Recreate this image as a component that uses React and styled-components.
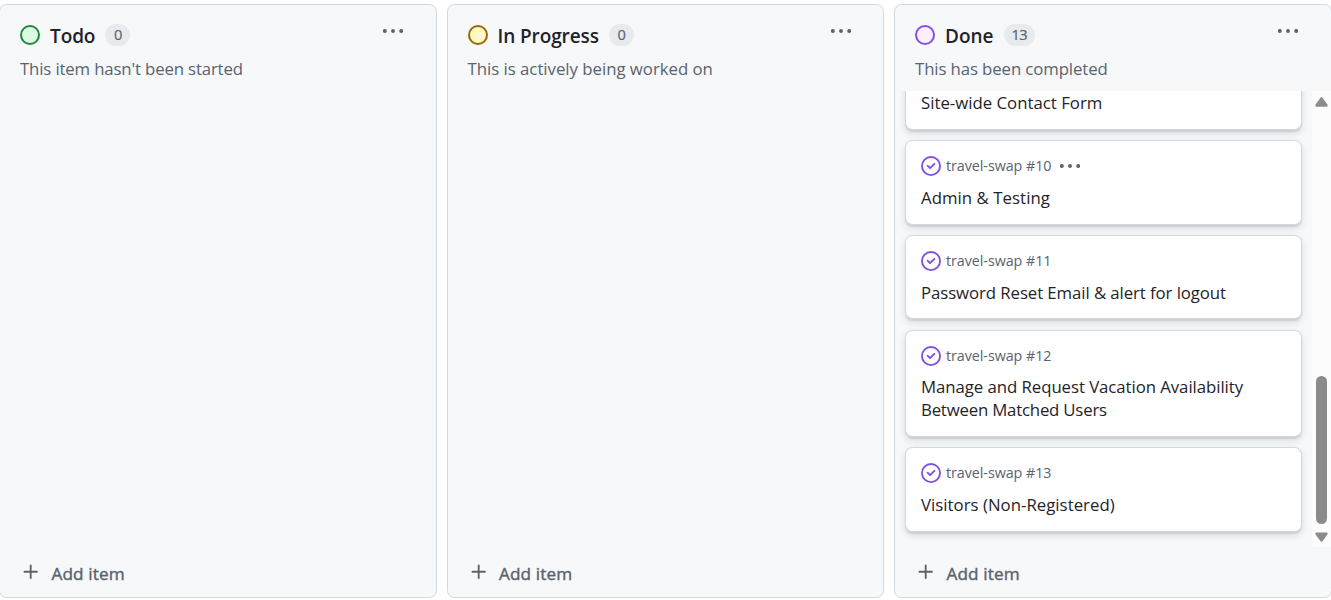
import React from "react";
import styled, { createGlobalStyle } from "styled-components";

const GlobalStyle = createGlobalStyle`
  * { box-sizing: border-box; }
  body {
    margin: 0;
    overflow: hidden;
    background: #ffffff;
    color: #1f2328;
    font-family: "Open Sans", "Noto Sans", sans-serif;
  }
`;

const Board = styled.main`
  display: flex;
  gap: 10px;
  height: 600px;
  margin-left: -0.6px;
  padding: 4px 0 2px;
`;

const ColumnFrame = styled.section`
  display: flex;
  flex: none;
  flex-direction: column;
  width: 437.5px;
  border: 1px solid #d1d9e0;
  border-radius: 7.5px;
  background: #f6f8fa;
`;

const ColumnHeader = styled.header`
  flex: none;
  height: 86px;
  padding: 15px 27px 0 19.6px;
`;

const TitleRow = styled.div`
  display: flex;
  align-items: center;
  height: 30px;
`;

const StatusDot = styled.span`
  width: 20px;
  height: 20px;
  border: 2px solid ${(p) => p.$line};
  border-radius: 50%;
  background: ${(p) => p.$fill};
`;

const ColumnTitle = styled.h2`
  margin: 1px 10px 0;
  font-size: 19px;
  font-weight: 600;
  line-height: 30px;
  letter-spacing: ${(p) => p.$tracking}px;
`;

const Counter = styled.span`
  min-width: 25px;
  height: 22px;
  padding: 0 8px;
  border-radius: 11px;
  background: #e7ebee;
  color: #59636e;
  font-size: 14.6px;
  line-height: 20.6px;
  letter-spacing: -0.6px;
  text-align: center;
  -webkit-text-stroke: 0.2px currentColor;
`;

const MenuButton = styled.button`
  display: flex;
  padding: 0;
  border: 0;
  background: none;
  color: #59636e;
  margin: ${(p) => p.$margin};
`;

const Description = styled.p`
  margin: 4px 0 0;
  color: #59636e;
  font-size: 16.8px;
  line-height: 30px;
  letter-spacing: ${(p) => p.$tracking}px;
  white-space: nowrap;
`;

const ColumnBody = styled.div`
  display: flex;
  flex: none;
  height: 456px;
`;

const CardList = styled.div`
  display: flex;
  flex: 1;
  flex-direction: column;
  justify-content: flex-end;
  gap: 10.2px;
  padding: 0 10px 15.5px;
  overflow: hidden;
`;

const Card = styled.article`
  flex: none;
  padding: 15px 15px 13.9px 14.6px;
  border: 1px solid #d1d9e0;
  border-radius: 7.5px;
  background: #ffffff;
  box-shadow: 0 1.25px 1.25px 0 #25292e1a, 0 3.75px 7.5px 0 #25292e1f;
`;

const CardMeta = styled.div`
  display: flex;
  align-items: center;
  height: 20px;
  margin-bottom: 10.8px;
  color: #59636e;
  font-size: 14.3px;
  letter-spacing: -0.05px;
`;

const IssueRef = styled.span`
  margin: 0 0 1px 5px;
`;

const CardTitle = styled.h3`
  margin: 0;
  font-size: 16.8px;
  font-weight: 400;
  line-height: 22.8px;
`;

const TitleLine = styled.span`
  display: block;
  letter-spacing: ${(p) => p.$tracking}px;
  white-space: nowrap;
`;

const Scrollbar = styled.div`
  display: flex;
  flex: none;
  flex-direction: column;
  align-items: center;
  width: 19px;
  padding: 5px 0 4px;
  background: #fcfcfc;
`;

const ScrollThumb = styled.div`
  width: 11px;
  height: 148px;
  margin: auto 0 7px;
  border-radius: 5.5px;
  background: #8b8b8b;
`;

const AddButton = styled.button`
  display: flex;
  align-items: center;
  height: 50px;
  margin: auto 0 0;
  padding: 0 20.6px 0;
  border: 0;
  background: none;
  color: #59636e;
  font: 400 17.2px/24px "Open Sans", "Noto Sans", sans-serif;
  letter-spacing: 0.12px;
  -webkit-text-stroke: 0.4px currentColor;
`;

const AddLabel = styled.span`
  margin: 3px 0 0 10.4px;
`;

const Glyph = styled.svg`
  display: block;
  flex: none;
  fill: ${(p) => p.$color || "currentColor"};
`;

const KebabIcon = () => (
  <Glyph width="20" height="20" viewBox="0 0 16 16">
    <circle cx="1.5" cy="8" r="1.55" />
    <circle cx="8" cy="8" r="1.55" />
    <circle cx="14.5" cy="8" r="1.55" />
  </Glyph>
);

const PlusIcon = () => (
  <Glyph width="20" height="20" viewBox="0 0 16 16">
    <path d="M7.75 2a.75.75 0 0 1 .75.75V7h4.25a.75.75 0 0 1 0 1.5H8.5v4.25a.75.75 0 0 1-1.5 0V8.5H2.75a.75.75 0 0 1 0-1.5H7V2.75A.75.75 0 0 1 7.75 2Z" />
  </Glyph>
);

const ClosedIcon = () => (
  <Glyph width="20" height="20" viewBox="0 0 16 16" $color="#8250df">
    <path d="M11.28 6.78a.75.75 0 0 0-1.06-1.06L7.25 8.69 5.78 7.22a.75.75 0 0 0-1.06 1.06l2 2a.75.75 0 0 0 1.06 0l3.5-3.5Z" />
    <path d="M16 8A8 8 0 1 1 0 8a8 8 0 0 1 16 0Zm-1.5 0a6.5 6.5 0 1 0-13 0 6.5 6.5 0 0 0 13 0Z" />
  </Glyph>
);

const ArrowIcon = ({ d }) => (
  <Glyph width="13" height="12" viewBox="0 0 13 12" $color="#8b8b8b">
    <path d={d} />
  </Glyph>
);

const issues = [
  { lines: [["Site-wide Contact Form", 0]] },
  { number: 10, lines: [["Admin & Testing", 0.05]], active: true },
  { number: 11, lines: [["Password Reset Email & alert for logout", -0.08]] },
  {
    number: 12,
    lines: [
      ["Manage and Request Vacation Availability", -0.06],
      ["Between Matched Users", -0.2],
    ],
  },
  { number: 13, lines: [["Visitors (Non-Registered)", 0.02]] },
];

const columns = [
  {
    title: "Todo", titleTracking: -0.1, count: 0, line: "#1f883d", fill: "#dafbe1",
    text: "This item hasn't been started", textTracking: -0.15,
  },
  {
    title: "In Progress", titleTracking: -0.1, count: 0, line: "#9a6700", fill: "#fff8c5",
    text: "This is actively being worked on", textTracking: -0.02,
  },
  {
    title: "Done", titleTracking: 0, count: 13, line: "#8250df", fill: "#fbefff",
    text: "This has been completed", textTracking: -0.11, issues,
  },
];

const IssueCard = ({ issue }) => (
  <Card>
    <CardMeta>
      {issue.number && (
        <>
          <ClosedIcon />
          <IssueRef>travel-swap #{issue.number}</IssueRef>
        </>
      )}
      {issue.active && (
        <MenuButton $margin="-1px 0 0 9px" aria-label="Card actions">
          <KebabIcon />
        </MenuButton>
      )}
    </CardMeta>
    <CardTitle>
      {issue.lines.map(([text, tracking]) => (
        <TitleLine key={text} $tracking={tracking}>{text}</TitleLine>
      ))}
    </CardTitle>
  </Card>
);

const Column = ({ column }) => (
  <ColumnFrame>
    <ColumnHeader>
      <TitleRow>
        <StatusDot $line={column.line} $fill={column.fill} />
        <ColumnTitle $tracking={column.titleTracking}>{column.title}</ColumnTitle>
        <Counter>{column.count}</Counter>
        <MenuButton $margin="-8px 5.5px 0 auto" aria-label="Column actions">
          <KebabIcon />
        </MenuButton>
      </TitleRow>
      <Description $tracking={column.textTracking}>{column.text}</Description>
    </ColumnHeader>
    {column.issues && (
      <ColumnBody>
        <CardList>
          {column.issues.map((issue) => (
            <IssueCard key={issue.lines[0][0]} issue={issue} />
          ))}
        </CardList>
        <Scrollbar>
          <ArrowIcon d="M5.3 2 Q6.5 .2 7.7 2 L12.4 8.6 Q13.2 10.6 11.4 10.8 H1.6 Q-.2 10.6 .6 8.6 Z" />
          <ScrollThumb />
          <ArrowIcon d="M5.3 10 Q6.5 11.6 7.7 10 L12.4 3.4 Q13.2 1.5 11.4 1.4 H1.6 Q-.2 1.5 .6 3.4 Z" />
        </Scrollbar>
      </ColumnBody>
    )}
    <AddButton>
      <PlusIcon />
      <AddLabel>Add item</AddLabel>
    </AddButton>
  </ColumnFrame>
);

export default function App() {
  return (
    <>
      <GlobalStyle />
      <Board>
        {columns.map((column) => (
          <Column key={column.title} column={column} />
        ))}
      </Board>
    </>
  );
}
